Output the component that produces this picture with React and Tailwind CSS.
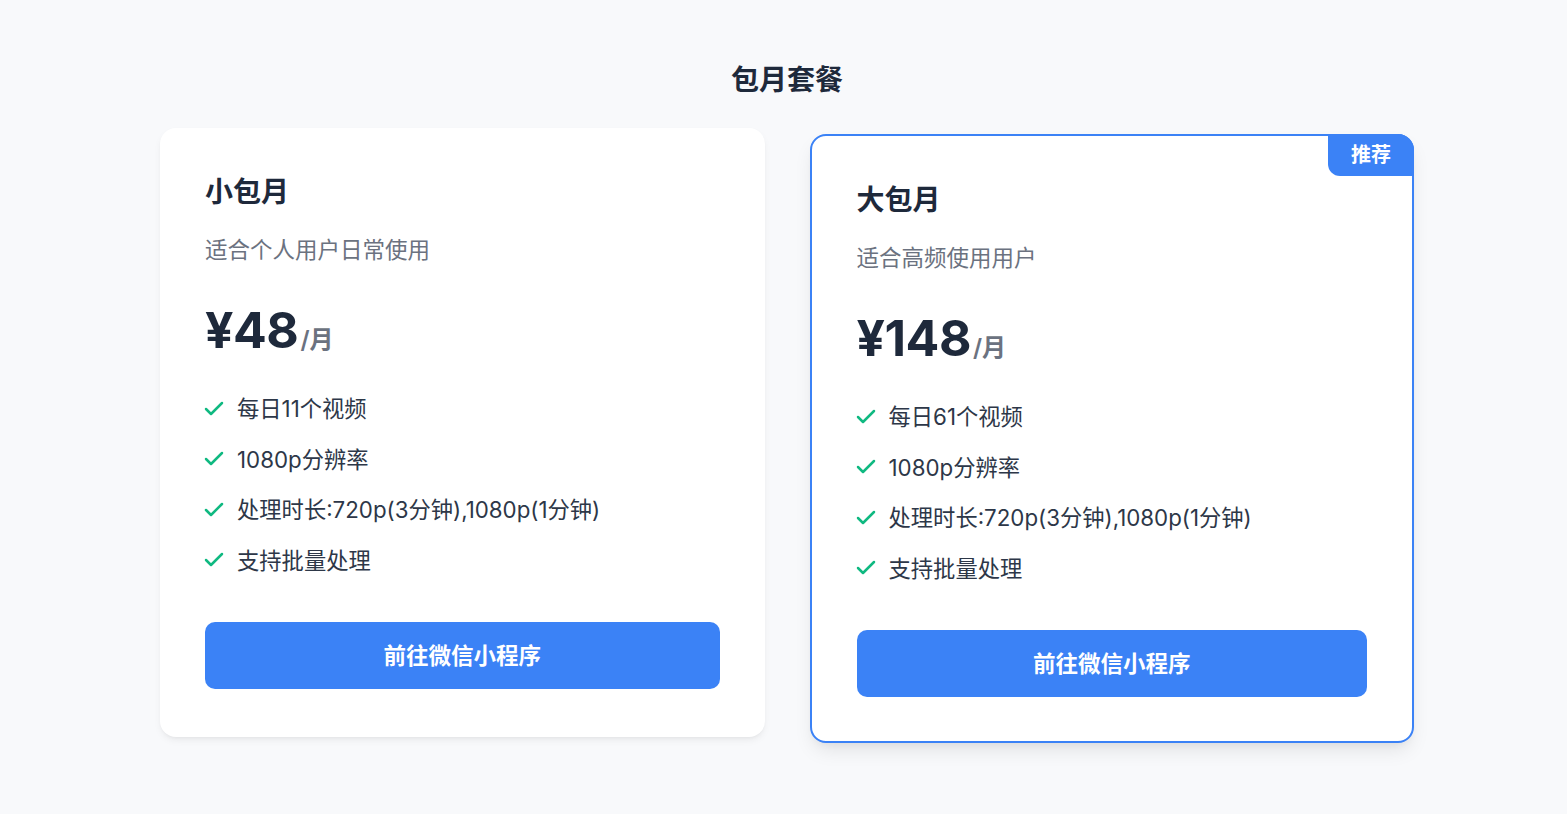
import React from 'react';
import { Check } from 'lucide-react';

const plans = [
  {
    name: '小包月',
    desc: '适合个人用户日常使用',
    price: '48',
    features: ['每日11个视频', '1080p分辨率', '处理时长:720p(3分钟),1080p(1分钟)', '支持批量处理'],
    featured: false,
  },
  {
    name: '大包月',
    desc: '适合高频使用用户',
    price: '148',
    features: ['每日61个视频', '1080p分辨率', '处理时长:720p(3分钟),1080p(1分钟)', '支持批量处理'],
    featured: true,
  },
];

const PlanCard = ({ plan }) => {
  const { name, desc, price, features, featured } = plan;
  return (
    <div
      className={
        featured
          ? 'relative mt-[6px] bg-white rounded-[16px] border-2 border-[#3b82f6] px-[45px] pt-[46px] pb-[44px] shadow-[0_10px_20px_-4px_rgba(0,0,0,0.1),0_4px_8px_-4px_rgba(0,0,0,0.06)]'
        : 'relative bg-white rounded-[16px] px-[45px] pt-[46px] pb-[48px] shadow-[0_4px_8px_-2px_rgba(0,0,0,0.08),0_2px_4px_-2px_rgba(0,0,0,0.05)]'
      }
    >
      {featured && (
        <div className="absolute -top-[2px] -right-[2px] w-[86px] h-[42px] flex items-center justify-center bg-[#3b82f6] text-white text-[20px] font-bold rounded-tr-[16px] rounded-bl-[12px]">
          推荐
        </div>
      )}
      <h3 className="text-[28px] leading-[36px] font-bold text-[#1e293b]">{name}</h3>
      <p className="mt-[23px] text-[22.5px] leading-[33px] text-[#6b7280]">{desc}</p>
      <div className="mt-[40px] flex items-baseline">
        <span className="text-[50px] leading-[48px] font-bold text-[#1e293b] tracking-[-0.5px]">¥{price}</span>
        <span className="ml-[2px] text-[24px] font-semibold text-[#6b7280]">/月</span>
      </div>
      <ul className="mt-[34px] flex flex-col gap-[17.5px]">
        {features.map((f) => (
          <li key={f} className="flex items-center gap-[11px] text-[22.3px] leading-[33px] text-[#2d3748]">
            <Check className="-ml-[3px] w-[24px] h-[24px] shrink-0 text-[#10b981]" strokeWidth={2.5} />
            <span>{f}</span>
          </li>
        ))}
      </ul>
      <button className="mt-[45.5px] w-full h-[67px] rounded-[10px] bg-[#3b82f6] text-white text-[22.5px] font-semibold">
        前往微信小程序
      </button>
    </div>
  );
};

export default function App() {
  return (
    <div
      className="min-h-screen bg-[#f8f9fb] pt-[62px] pb-[60px] pl-[7px]"
      style={{ fontFamily: 'Inter, "Noto Sans CJK SC", sans-serif' }}
    >
      <h2 className="text-center text-[28px] leading-[36px] font-bold text-[#1e293b]">包月套餐</h2>
      <div className="mx-auto mt-[30px] w-[1254px] grid grid-cols-2 gap-[45px] items-start">
        {plans.map((p) => (
          <PlanCard key={p.name} plan={p} />
        ))}
      </div>
    </div>
  );
}
